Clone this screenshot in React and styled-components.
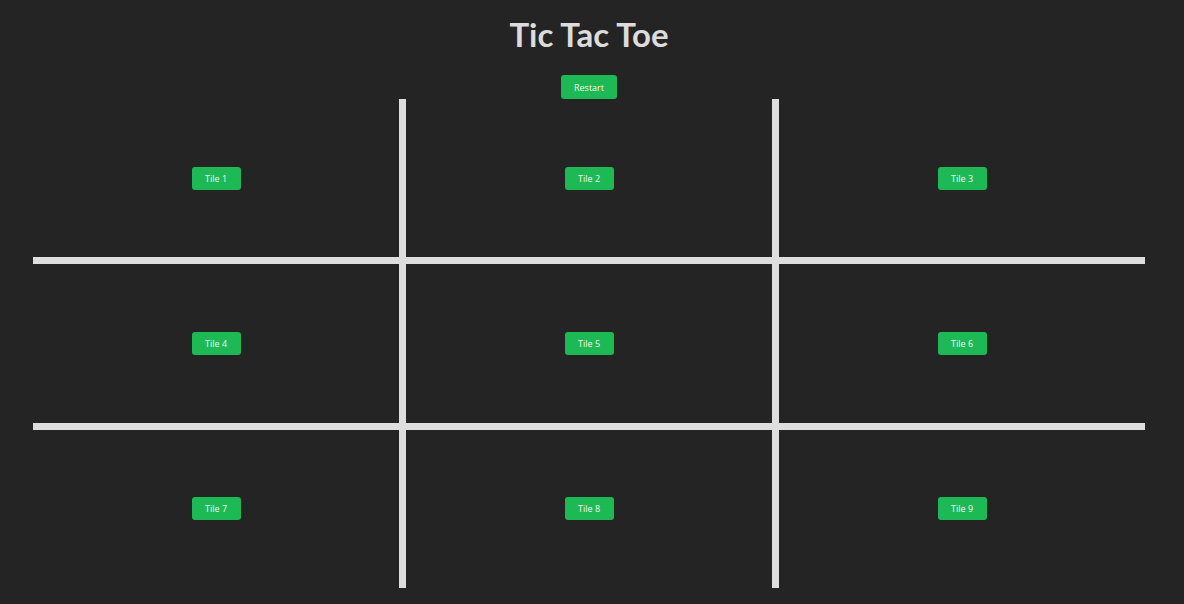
import styled, { createGlobalStyle } from 'styled-components';

const GlobalStyle = createGlobalStyle`
  html, body {
    margin: 0;
    padding: 0;
    background: #242424;
  }
  body {
    font-family: "Open Sans", "Noto Sans", sans-serif;
  }
`;

const tiles = [1, 2, 3, 4, 5, 6, 7, 8, 9];

function App() {
  return (
    <StPage>
      <GlobalStyle />
      <StTitle>Tic Tac Toe</StTitle>
      <StRestart>Restart</StRestart>
      <StBoard>
        {tiles.map((n) => (
          <StCell key={n}>
            <StTile>Tile {n}</StTile>
          </StCell>
        ))}
      </StBoard>
    </StPage>
  );
}

export default App;

const StPage = styled.div`
  width: 1178px;
  height: 604px;
  display: flex;
  flex-direction: column;
  align-items: center;
  padding-top: 14px;
  box-sizing: border-box;
`;

const StTitle = styled.h1`
  margin: 0 0 21px;
  font-family: Lato, "Open Sans", sans-serif;
  font-size: 33px;
  line-height: 40px;
  font-weight: 700;
  color: #dcdcdc;
`;

const StButton = styled.button`
  border: 0;
  border-radius: 3px;
  background: #1db954;
  color: #f4f4f4;
  font-family: "Open Sans", "Noto Sans", sans-serif;
  font-size: 9px;
  padding: 0;
  cursor: pointer;
`;

const StRestart = styled(StButton)`
  width: 56px;
  height: 24px;
`;

const StTile = styled(StButton)`
  width: 49px;
  height: 23px;
`;

const StBoard = styled.div`
  align-self: flex-start;
  margin-left: 33px;
  width: 1112px;
  height: 489px;
  display: grid;
  grid-template-columns: repeat(3, 1fr);
  grid-template-rows: repeat(3, 1fr);
  gap: 7px;
  background: #dedede;
`;

const StCell = styled.div`
  background: #242424;
  display: flex;
  align-items: center;
  justify-content: center;
`;
